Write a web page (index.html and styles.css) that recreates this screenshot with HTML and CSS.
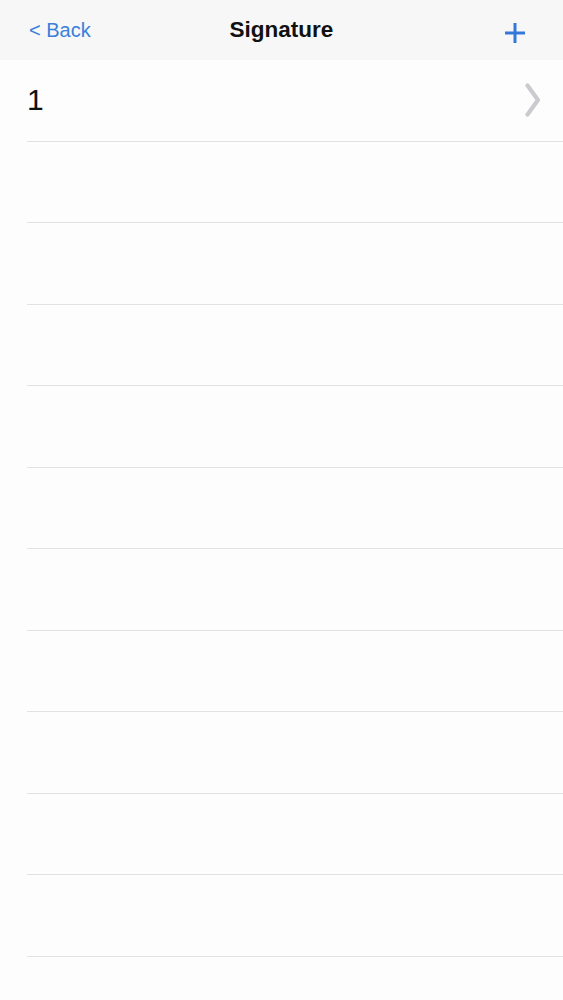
FILE: index.html
```html
<!DOCTYPE html>
<html>
<head>
<meta charset="utf-8">
<link rel="stylesheet" href="styles.css">
</head>
<body>
<header class="nav">
  <div class="nav-left"><span class="back">&lt; Back</span></div>
  <div class="nav-title">Signature</div>
  <div class="nav-right">
    <svg class="plus" width="22" height="22" viewBox="0 0 22 22"><path d="M11 1V21M1 11H21" stroke="#3479d9" stroke-width="3" fill="none"/></svg>
  </div>
</header>
<main class="list">
  <div class="row">
    <span class="label">1</span>
    <svg class="chev" width="16" height="34" viewBox="0 0 16 34"><path d="M2.5 2.5L13 17L2.5 31.5" stroke="#cbcbcf" stroke-width="4.2" fill="none" stroke-linecap="round" stroke-linejoin="round"/></svg>
  </div>
  <div class="row"></div>
  <div class="row"></div>
  <div class="row"></div>
  <div class="row"></div>
  <div class="row"></div>
  <div class="row"></div>
  <div class="row"></div>
  <div class="row"></div>
  <div class="row"></div>
  <div class="row"></div>
  <div class="row"></div>
</main>
</body>
</html>
```
FILE: styles.css
```css
html, body {
  margin: 0;
  padding: 0;
  background: #fdfdfe;
  font-family: "Liberation Sans", Arial, sans-serif;
  overflow: hidden;
}
.nav {
  height: 60px;
  background: #f7f7f8;
  display: grid;
  grid-template-columns: 1fr auto 1fr;
  align-items: center;
}
.nav-left {
  padding-left: 29px;
}
.back {
  color: #3a7fd8;
  font-size: 20px;
}
.nav-title {
  font-size: 22.5px;
  font-weight: bold;
  color: #111;
}
.nav-right {
  display: flex;
  justify-content: flex-end;
  padding-right: 37px;
  padding-top: 6px;
}
.list {
  padding-left: 27px;
}
.row {
  box-sizing: border-box;
  height: 81.5px;
  border-bottom: 1px solid #e2e2e5;
  display: flex;
  align-items: center;
  justify-content: space-between;
  padding-right: 22px;
}
.label {
  font-size: 30px;
  color: #111;
}
.chev {
  display: block;
}
```
